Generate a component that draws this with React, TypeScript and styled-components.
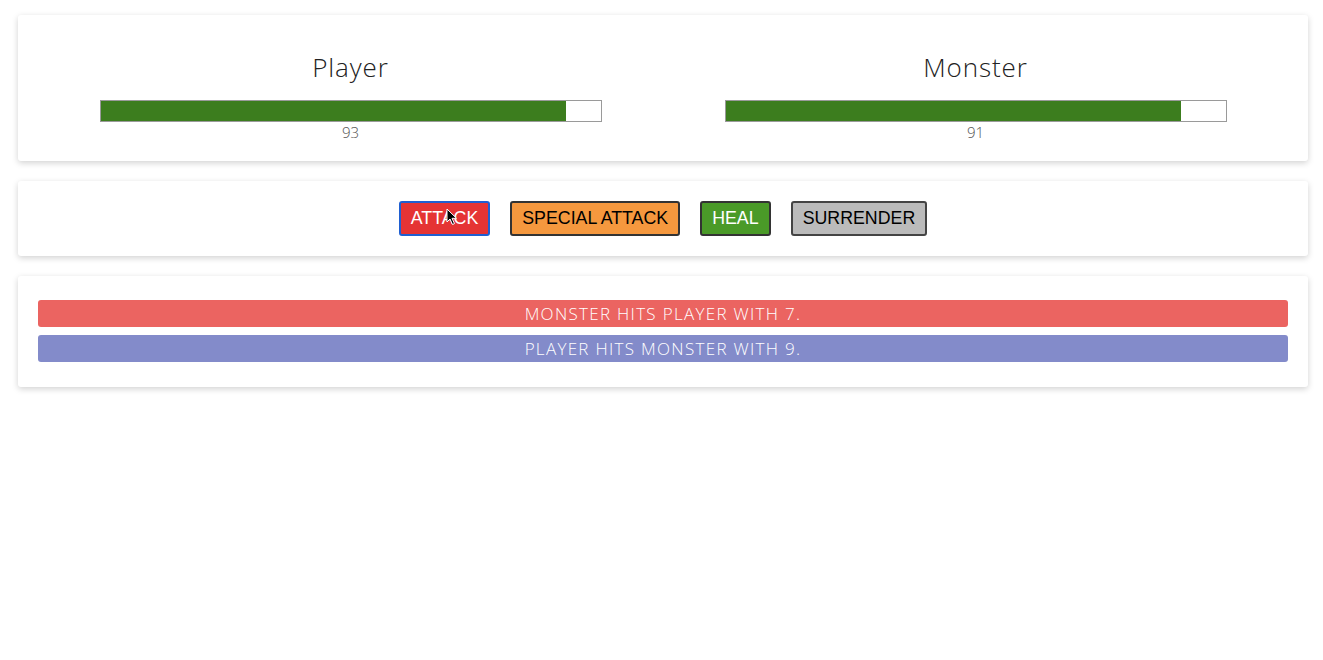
import React from 'react'
import styled, { createGlobalStyle } from 'styled-components'

const GlobalStyle = createGlobalStyle`
    html, body {
        margin: 0;
        padding: 0;
        background: #ffffff;
        font-family: 'Open Sans', 'Liberation Sans', sans-serif;
        font-weight: 300;
    }
`

const Page = styled.div`
    display: flex;
    flex-direction: column;
    gap: 20px;
    padding: 15px 15px 20px 18px;
`

const Card = styled.section<{ $pad?: string }>`
    background: #fff;
    border-radius: 3px;
    box-shadow: 0 2px 6px rgba(0, 0, 0, 0.18);
    padding: ${(p) => p.$pad ?? '20px'};
`

const Fighters = styled.div`
    display: grid;
    grid-template-columns: 1fr 1fr;
`

const Fighter = styled.div`
    display: flex;
    flex-direction: column;
    align-items: center;
`

const Name = styled.h2`
    margin: 0 0 18px;
    font-size: 26px;
    font-weight: 300;
    color: #222;
    line-height: 30px;
    letter-spacing: 0.9px;
`

const Bar = styled.div`
    width: 80%;
    height: 20px;
    border: 1px solid #9a9a9a;
    background: #fff;
`

const Fill = styled.div`
    height: 100%;
    background: #3c7d1e;
`

const Value = styled.div`
    font-size: 15px;
    color: #555;
    line-height: 20px;
`

const Controls = styled.div`
    display: flex;
    justify-content: center;
    gap: 20px;
`

const Button = styled.button<{ $bg: string; $fg: string; $border: string }>`
    font-family: 'Liberation Sans', Arial, sans-serif;
    font-size: 17.8px;
    font-weight: 400;
    padding: 6px 10px;
    line-height: 19px;
    border-radius: 3px;
    border: 2px solid ${(p) => p.$border};
    background: ${(p) => p.$bg};
    color: ${(p) => p.$fg};
    cursor: pointer;
    position: relative;
`

const Cursor = styled.svg`
    position: absolute;
    left: 45px;
    top: 5px;
    width: 12px;
    height: 18px;
    pointer-events: none;
`

const Log = styled.ul`
    list-style: none;
    margin: 0;
    padding: 0;
    display: flex;
    flex-direction: column;
    gap: 8px;
`

const Entry = styled.li<{ $kind: 'monster' | 'player' }>`
    background: ${(p) => (p.$kind === 'monster' ? '#eb6461' : '#838bca')};
    color: #fff;
    text-align: center;
    text-transform: uppercase;
    font-size: 17px;
    line-height: 27px;
    border-radius: 3px;
    letter-spacing: 1.3px;
`

const fighters = [
    { name: 'Player', health: 93 },
    { name: 'Monster', health: 91 },
]

const log = [
    { kind: 'monster' as const, text: 'Monster hits Player with 7.' },
    { kind: 'player' as const, text: 'Player hits Monster with 9.' },
]

export default function App() {
    return (
        <>
            <GlobalStyle />
            <Page>
                <Card $pad="37px 20px 19px">
                    <Fighters>
                        {fighters.map((f) => (
                            <Fighter key={f.name}>
                                <Name>{f.name}</Name>
                                <Bar>
                                    <Fill style={{ width: `${f.health}%` }} />
                                </Bar>
                                <Value>{f.health}</Value>
                            </Fighter>
                        ))}
                    </Fighters>
                </Card>

                <Card $pad="20px">
                    <Controls>
                        <Button $bg="#e53434" $fg="#fff" $border="#1f5fd1">
                            ATTACK
                            <Cursor viewBox="0 0 12 18">
                                <path
                                    d="M1 1 L1 14 L4 11 L6.5 16.5 L8.5 15.6 L6 10.3 L10.5 10.3 Z"
                                    fill="#000"
                                    stroke="#fff"
                                    strokeWidth="1"
                                />
                            </Cursor>
                        </Button>
                        <Button $bg="#f5983e" $fg="#000" $border="#333">
                            SPECIAL ATTACK
                        </Button>
                        <Button $bg="#4a9a28" $fg="#fff" $border="#333">
                            HEAL
                        </Button>
                        <Button $bg="#bbbbbb" $fg="#000" $border="#444">
                            SURRENDER
                        </Button>
                    </Controls>
                </Card>

                <Card $pad="24px 20px 25px">
                    <Log>
                        {log.map((e, i) => (
                            <Entry key={i} $kind={e.kind}>
                                {e.text}
                            </Entry>
                        ))}
                    </Log>
                </Card>
            </Page>
        </>
    )
}
